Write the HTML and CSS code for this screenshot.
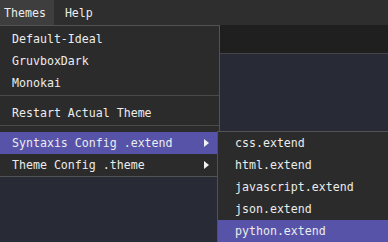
FILE: index.html
```html
<!DOCTYPE html>
<html lang="en">
<head>
    <meta charset="UTF-8">
    <meta name="viewport" content="width=device-width, initial-scale=1.0">
    <title>Themes Menu</title>
    <link rel="stylesheet" href="styles.css">
</head>
<body>
    <div class="app">
        <nav class="menubar">
            <span class="menubar-item active">Themes</span>
            <span class="menubar-item">Help</span>
        </nav>
        <div class="toolbar"></div>
        <div class="editor"></div>

        <!-- Themes dropdown -->
        <ul class="menu main-menu">
            <li class="menu-item">Default-Ideal</li>
            <li class="menu-item">GruvboxDark</li>
            <li class="menu-item">Monokai</li>
            <li class="separator"></li>
            <li class="menu-item">Restart Actual Theme</li>
            <li class="separator"></li>
            <li class="menu-item has-sub selected">Syntaxis Config .extend <i class="arrow"></i></li>
            <li class="menu-item has-sub">Theme Config .theme <i class="arrow"></i></li>
        </ul>

        <!-- Syntaxis submenu -->
        <ul class="menu sub-menu">
            <li class="menu-item">css.extend</li>
            <li class="menu-item">html.extend</li>
            <li class="menu-item">javascript.extend</li>
            <li class="menu-item">json.extend</li>
            <li class="menu-item selected">python.extend</li>
        </ul>
    </div>
</body>
</html>
```

FILE: styles.css
```css
body {
    margin: 0;
    background-color: #282a35;
    font-family: 'DejaVu Sans Mono', 'Liberation Mono', monospace;
    font-size: 11.6px;
    color: #ececec;
    overflow: hidden;
}
.app {
    position: relative;
    width: 388px;
    height: 242px;
    overflow: hidden;
    display: flex;
    flex-direction: column;
}
.menubar {
    display: flex;
    height: 25px;
    background-color: #2e2e2e;
}
.menubar-item {
    display: flex;
    align-items: center;
    padding: 0 8px 0 4px;
}
.menubar-item + .menubar-item {
    padding-left: 11px;
}
.menubar-item.active {
    background-color: #3e3e3e;
}
.toolbar {
    height: 28px;
    background-color: #1f1f1f;
    border-bottom: 1px solid #454545;
}
.editor {
    flex: 1;
    background-color: #282a35;
}

/* Dropdown menus */
.menu {
    position: absolute;
    margin: 0;
    padding: 0;
    list-style: none;
    background-color: #2b2b2b;
    border: 1px solid #525252;
}
.main-menu {
    top: 25px;
    left: -1px;
    width: 219px;
    padding-top: 2px;
}
.sub-menu {
    top: 131px;
    left: 217px;
    width: 170px;
    border-right: none;
    border-bottom: none;
}
.menu-item {
    display: flex;
    align-items: center;
    height: 22px;
    padding-left: 12px;
    white-space: nowrap;
}
.sub-menu .menu-item {
    padding-left: 17px;
}
.menu-item.selected {
    background-color: #5653a9;
}
.separator {
    height: 1px;
    margin: 1px 0 6px;
    background-color: #4a4a4a;
}
.has-sub {
    justify-content: space-between;
    padding-right: 10px;
}
.arrow {
    width: 0;
    height: 0;
    border-left: 5px solid #f2f2f2;
    border-top: 4px solid transparent;
    border-bottom: 4px solid transparent;
}
```
